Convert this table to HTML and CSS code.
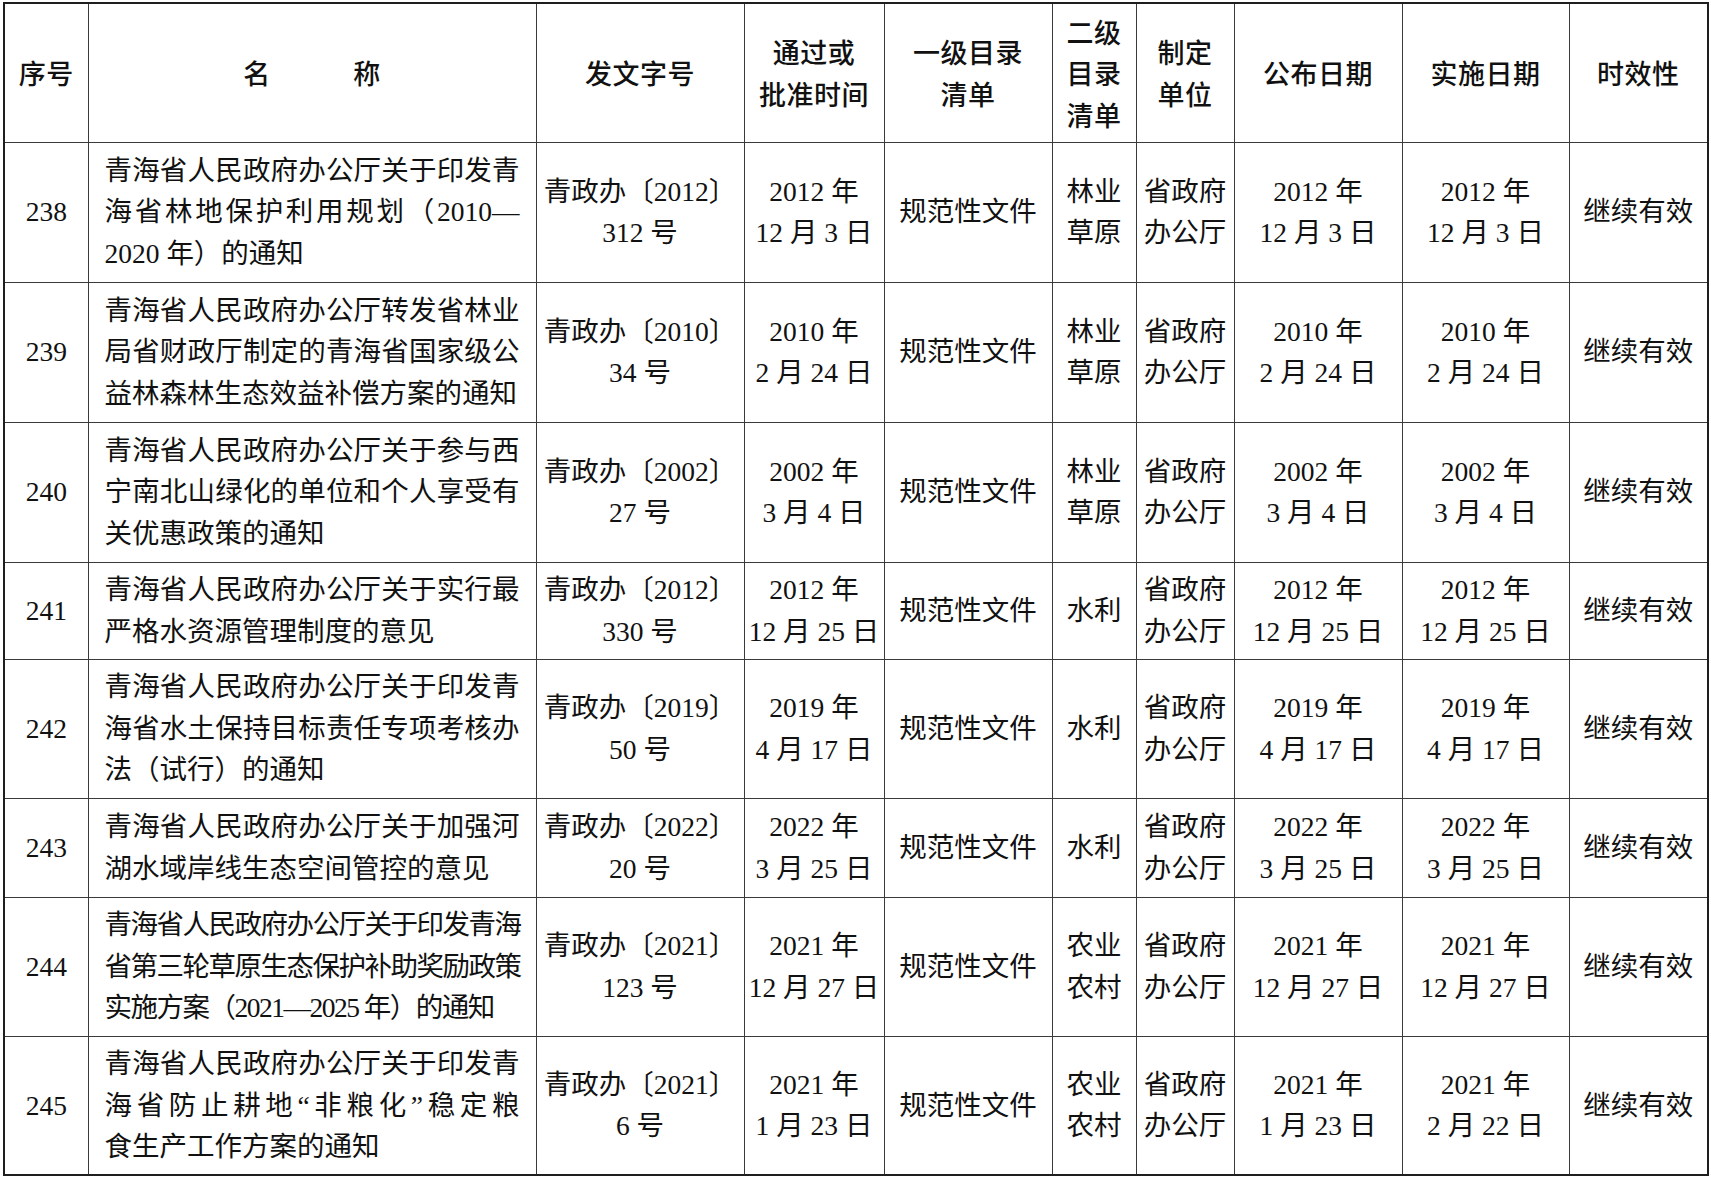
FILE: index.html
```html
<!DOCTYPE html>
<html lang="zh-CN">
<head>
<meta charset="utf-8">
<title>规范性文件目录</title>
<link rel="stylesheet" href="styles.css">
</head>
<body>
<table class="list">
  <colgroup>
    <col class="c-no"><col class="c-name"><col class="c-doc"><col class="c-pass"><col class="c-l1"><col class="c-l2"><col class="c-unit"><col class="c-pub"><col class="c-eff"><col class="c-valid">
  </colgroup>
  <thead>
    <tr class="head">
      <th>序号</th>
      <th>名　　　称</th>
      <th>发文字号</th>
      <th>通过或<br>批准时间</th>
      <th>一级目录<br>清单</th>
      <th>二级<br>目录<br>清单</th>
      <th>制定<br>单位</th>
      <th>公布日期</th>
      <th>实施日期</th>
      <th>时效性</th>
    </tr>
  </thead>
  <tbody>
    <tr class="r3">
      <td>238</td>
      <td class="name"><span class="ln">青海省人民政府办公厅关于印发青</span><span class="ln">海省林地保护利用规划（2010—</span><span class="ln last">2020 年）的通知</span></td>
      <td>青政办〔2012〕<br>312 号</td>
      <td>2012 年<br>12 月 3 日</td>
      <td>规范性文件</td>
      <td>林业<br>草原</td>
      <td>省政府<br>办公厅</td>
      <td>2012 年<br>12 月 3 日</td>
      <td>2012 年<br>12 月 3 日</td>
      <td>继续有效</td>
    </tr>
    <tr class="r3">
      <td>239</td>
      <td class="name"><span class="ln">青海省人民政府办公厅转发省林业</span><span class="ln">局省财政厅制定的青海省国家级公</span><span class="ln last">益林森林生态效益补偿方案的通知</span></td>
      <td>青政办〔2010〕<br>34 号</td>
      <td>2010 年<br>2 月 24 日</td>
      <td>规范性文件</td>
      <td>林业<br>草原</td>
      <td>省政府<br>办公厅</td>
      <td>2010 年<br>2 月 24 日</td>
      <td>2010 年<br>2 月 24 日</td>
      <td>继续有效</td>
    </tr>
    <tr class="r3">
      <td>240</td>
      <td class="name"><span class="ln">青海省人民政府办公厅关于参与西</span><span class="ln">宁南北山绿化的单位和个人享受有</span><span class="ln last">关优惠政策的通知</span></td>
      <td>青政办〔2002〕<br>27 号</td>
      <td>2002 年<br>3 月 4 日</td>
      <td>规范性文件</td>
      <td>林业<br>草原</td>
      <td>省政府<br>办公厅</td>
      <td>2002 年<br>3 月 4 日</td>
      <td>2002 年<br>3 月 4 日</td>
      <td>继续有效</td>
    </tr>
    <tr class="r2a">
      <td>241</td>
      <td class="name"><span class="ln">青海省人民政府办公厅关于实行最</span><span class="ln last">严格水资源管理制度的意见</span></td>
      <td>青政办〔2012〕<br>330 号</td>
      <td>2012 年<br>12 月 25 日</td>
      <td>规范性文件</td>
      <td>水利</td>
      <td>省政府<br>办公厅</td>
      <td>2012 年<br>12 月 25 日</td>
      <td>2012 年<br>12 月 25 日</td>
      <td>继续有效</td>
    </tr>
    <tr class="r3b">
      <td>242</td>
      <td class="name"><span class="ln">青海省人民政府办公厅关于印发青</span><span class="ln">海省水土保持目标责任专项考核办</span><span class="ln last">法（试行）的通知</span></td>
      <td>青政办〔2019〕<br>50 号</td>
      <td>2019 年<br>4 月 17 日</td>
      <td>规范性文件</td>
      <td>水利</td>
      <td>省政府<br>办公厅</td>
      <td>2019 年<br>4 月 17 日</td>
      <td>2019 年<br>4 月 17 日</td>
      <td>继续有效</td>
    </tr>
    <tr class="r2b">
      <td>243</td>
      <td class="name"><span class="ln">青海省人民政府办公厅关于加强河</span><span class="ln last">湖水域岸线生态空间管控的意见</span></td>
      <td>青政办〔2022〕<br>20 号</td>
      <td>2022 年<br>3 月 25 日</td>
      <td>规范性文件</td>
      <td>水利</td>
      <td>省政府<br>办公厅</td>
      <td>2022 年<br>3 月 25 日</td>
      <td>2022 年<br>3 月 25 日</td>
      <td>继续有效</td>
    </tr>
    <tr class="r3b">
      <td>244</td>
      <td class="name tight"><span class="ln">青海省人民政府办公厅关于印发青海</span><span class="ln">省第三轮草原生态保护补助奖励政策</span><span class="ln last">实施方案（2021—2025 年）的通知</span></td>
      <td>青政办〔2021〕<br>123 号</td>
      <td>2021 年<br>12 月 27 日</td>
      <td>规范性文件</td>
      <td>农业<br>农村</td>
      <td>省政府<br>办公厅</td>
      <td>2021 年<br>12 月 27 日</td>
      <td>2021 年<br>12 月 27 日</td>
      <td>继续有效</td>
    </tr>
    <tr class="r3b">
      <td>245</td>
      <td class="name"><span class="ln">青海省人民政府办公厅关于印发青</span><span class="ln">海省防止耕地“非粮化”稳定粮</span><span class="ln last">食生产工作方案的通知</span></td>
      <td>青政办〔2021〕<br>6 号</td>
      <td>2021 年<br>1 月 23 日</td>
      <td>规范性文件</td>
      <td>农业<br>农村</td>
      <td>省政府<br>办公厅</td>
      <td>2021 年<br>1 月 23 日</td>
      <td>2021 年<br>2 月 22 日</td>
      <td>继续有效</td>
    </tr>
  </tbody>
</table>
</body>
</html>
```

FILE: styles.css
```css
html, body {
  margin: 0;
  padding: 0;
  background: #ffffff;
}

body {
  padding: 2px 0 0 3px;
}

.list {
  border-collapse: collapse;
  table-layout: fixed;
  width: 1706px;
  border: 2px solid #1e1e1e;
  color: #111111;
  font-family: "Liberation Serif", "Noto Sans CJK SC", serif;
  font-size: 27.5px;
  line-height: 41.5px;
}

.c-no { width: 84px; }
.c-name { width: 448px; }
.c-doc { width: 208px; }
.c-pass { width: 140px; }
.c-l1 { width: 168px; }
.c-l2 { width: 84px; }
.c-unit { width: 98px; }
.c-pub { width: 168px; }
.c-eff { width: 167px; }
.c-valid { width: 139px; }

.list th,
.list td {
  border: 1px solid #3a3a3a;
  padding: 0;
  text-align: center;
  vertical-align: middle;
  white-space: nowrap;
}

.list th {
  font-family: "Noto Sans CJK SC", sans-serif;
  font-weight: 500;
  font-size: 27px;
  letter-spacing: 0.5px;
  color: #111111;
}

.head { height: 139px; }
.r3 { height: 140px; }
.r2a { height: 97px; }
.r3b { height: 139px; }
.r2b { height: 99px; }

.list td.name {
  padding: 0 16px;
  text-align: left;
}

.ln {
  display: block;
  text-align: justify;
  text-align-last: justify;
}

.ln.last {
  text-align-last: left;
}

.tight {
  letter-spacing: -1.5px;
}
```
